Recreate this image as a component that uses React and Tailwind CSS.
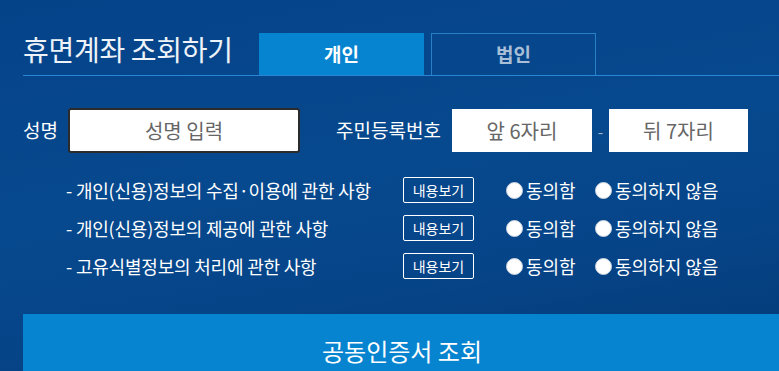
import React, { useState } from 'react';

const FONT = { fontFamily: '"Noto Sans CJK KR", "Noto Sans", sans-serif' };

const agreements = [
    '- 개인(신용)정보의 수집·이용에 관한 사항',
    '- 개인(신용)정보의 제공에 관한 사항',
    '- 고유식별정보의 처리에 관한 사항',
];

const Radio = ({ label, checked, onClick }) => (
    <button type="button" onClick={onClick} className="flex items-center gap-[3px] text-[18px] text-white leading-none">
        <span className="w-[17px] h-[17px] rounded-full bg-white border border-[#c9d3de] flex items-center justify-center">
            {checked && <span className="w-[8px] h-[8px] rounded-full bg-[#0784d0]" />}
        </span>
        <span>{label}</span>
    </button>
);

const App = () => {
    const [tab, setTab] = useState('personal');
    const [agree, setAgree] = useState({});

    return (
        <div
            style={FONT}
            className="w-[779px] h-[371px] overflow-hidden bg-[linear-gradient(170deg,#054389_0%,#07498e_45%,#064488_70%,#043a76_100%)] pl-[23px] pt-[33px]"
        >
            {/* header + tabs */}
            <div className="flex items-end border-b border-[#2a86d4] h-[43px]">
                <h1 className="w-[236px] text-[28px] leading-none text-[#eef3f9] font-normal pb-[12px] tracking-[-0.3px]">
                    휴면계좌 조회하기
                </h1>
                <button
                    onClick={() => setTab('personal')}
                    className="w-[165px] h-[42px] bg-[#0784d0] text-white text-[19px] font-bold"
                >
                    개인
                </button>
                <button
                    onClick={() => setTab('corp')}
                    className="ml-[7px] w-[165px] h-[42px] border border-b-0 border-[#2a7fc9] text-[#a9bfd8] text-[19px] font-bold"
                >
                    법인
                </button>
            </div>

            {/* name / resident number */}
            <div className="flex items-center mt-[32px] h-[45px]">
                <span className="text-[19px] text-white w-[45px]">성명</span>
                <input
                    placeholder="성명 입력"
                    className="w-[232px] h-[45px] bg-white border-2 border-[#2b2b2b] rounded-[3px] text-center text-[20px] text-[#555] placeholder:text-[#666]"
                />
                <span className="ml-[36px] text-[19px] text-white w-[116px]">주민등록번호</span>
                <input
                    placeholder="앞 6자리"
                    className="w-[140px] h-[43px] bg-white text-center text-[20px] placeholder:text-[#666]"
                />
                <span className="w-[17px] text-center text-[#9fb6d2] text-[16px]">-</span>
                <input
                    placeholder="뒤 7자리"
                    className="w-[139px] h-[43px] bg-white text-center text-[20px] placeholder:text-[#666]"
                />
            </div>

            {/* agreements */}
            <div className="mt-[24px] pl-[43px] flex flex-col gap-[12px]">
                {agreements.map((text, i) => (
                    <div key={i} className="flex items-center h-[26px]">
                        <span className="w-[337px] text-[18px] text-white tracking-[-0.2px] whitespace-nowrap">{text}</span>
                        <button className="w-[71px] h-[26px] border border-white rounded-[2px] text-[14px] text-white">
                            내용보기
                        </button>
                        <div className="ml-[32px] w-[89px]">
                            <Radio label="동의함" checked={agree[i] === 'y'} onClick={() => setAgree({ ...agree, [i]: 'y' })} />
                        </div>
                        <Radio label="동의하지 않음" checked={agree[i] === 'n'} onClick={() => setAgree({ ...agree, [i]: 'n' })} />
                    </div>
                ))}
            </div>

            {/* submit */}
            <button className="mt-[35px] w-[800px] h-[74px] bg-[#0784d0] text-white text-[24px] flex items-center justify-center pr-[42px]">
                공동인증서 조회
            </button>
        </div>
    );
};

export default App;
